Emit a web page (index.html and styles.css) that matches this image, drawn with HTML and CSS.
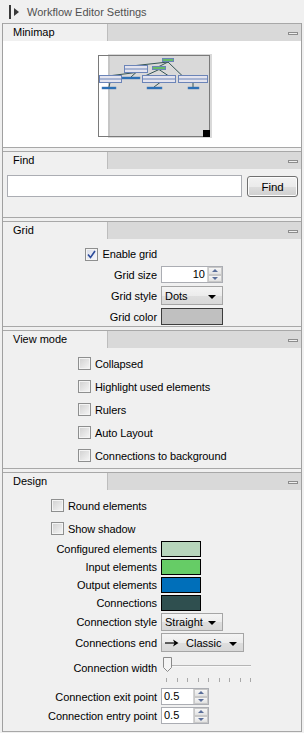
FILE: index.html
```html
<!DOCTYPE html>
<html lang="en">
<head>
  <meta charset="UTF-8">
  <title>Workflow Editor Settings</title>
  <link rel="stylesheet" href="styles.css">
</head>
<body>
  <div class="titlebar">
    <span class="grip"></span>
    <span class="arrow"></span>
    <span class="title">Workflow Editor Settings</span>
  </div>

  <div class="panel">
    <!-- Minimap -->
    <div class="section">
      <div class="section-head"><span class="tab">Minimap</span><span class="rest"><i class="minus"></i></span></div>
      <div class="section-body minimap">
        <svg class="map" width="114" height="84" viewBox="0 0 114 84">
          <rect x="10" y="0" width="104" height="84" fill="#d9d9d9"/>
          <rect x="10" y="1" width="2" height="81" fill="#c6c6c6"/>
          <g stroke="#355555" stroke-width="1" fill="none">
            <path d="M70 8 L38 11.5"/>
            <path d="M70 8 L61 12.5"/>
            <path d="M70 8 L84 21.5"/>
            <path d="M61 15.5 L48 21.5"/>
            <path d="M61 15.5 L70 21.5"/>
            <path d="M38 18.5 L14 21.5"/>
            <path d="M38 18.5 L33 23"/>
            <path d="M12 28.5 L11 33"/>
            <path d="M62 28.5 L56 33"/>
            <path d="M95 28.5 L95 33"/>
          </g>
          <g stroke="#6b84b8" stroke-width="1" fill="#e4e4ee">
            <rect x="26.5" y="11.5" width="23" height="7"/>
            <rect x="1.5" y="21.5" width="22" height="7"/>
            <rect x="44.5" y="21.5" width="33" height="7"/>
            <rect x="80.5" y="21.5" width="29" height="7"/>
          </g>
          <g stroke="#6b84b8" stroke-width="1">
            <path d="M27 15h22M2 25h21M45 25h32M81 25h28"/>
          </g>
          <g stroke="#6b84b8" fill="#66bb66">
            <rect x="64.5" y="4.5" width="11" height="3"/>
            <rect x="54.5" y="12.5" width="13" height="3"/>
          </g>
          <g fill="#1f6cb4" stroke="#5a7fb8" stroke-width="0.5">
            <rect x="24" y="23" width="18" height="2"/>
            <rect x="4" y="33" width="14" height="2"/>
            <rect x="49" y="33" width="15" height="2"/>
            <rect x="90" y="33" width="11" height="2"/>
          </g>
          <rect x="0.5" y="1.5" width="111" height="81" fill="none" stroke="#7a7a7a"/>
          <rect x="105" y="76" width="7" height="7" fill="#000"/>
        </svg>
      </div>
    </div>

    <!-- Find -->
    <div class="section">
      <div class="section-head"><span class="tab">Find</span><span class="rest"><i class="minus"></i></span></div>
      <div class="section-body find">
        <input class="field find-field" type="text">
        <button class="btn">Find</button>
      </div>
    </div>

    <!-- Grid -->
    <div class="section">
      <div class="section-head"><span class="tab">Grid</span><span class="rest"><i class="minus"></i></span></div>
      <div class="section-body grid-body">
        <div class="form">
          <label class="check check-right">
            <span class="box checked">
              <svg width="9" height="9" viewBox="0 0 9 9"><path d="M1 4.5 L3.5 7.5 L8 1" stroke="#2a4a9a" stroke-width="1.6" fill="none"/></svg>
            </span>
            Enable grid
          </label>
          <span></span>

          <span class="lbl">Grid size</span>
          <div class="spin spin-grid">
            <span class="spin-val right">10</span>
            <span class="spin-btns"><span class="up"></span><span class="down"></span></span>
          </div>

          <span class="lbl">Grid style</span>
          <div class="select sel-dots"><span>Dots</span><span class="caret"></span></div>

          <span class="lbl">Grid color</span>
          <span class="swatch sw-grid"></span>
        </div>
      </div>
    </div>

    <!-- View mode -->
    <div class="section">
      <div class="section-head"><span class="tab">View mode</span><span class="rest"><i class="minus"></i></span></div>
      <div class="section-body view-body">
        <div class="checks">
          <label class="check"><span class="box"></span>Collapsed</label>
          <label class="check"><span class="box"></span>Highlight used elements</label>
          <label class="check"><span class="box"></span>Rulers</label>
          <label class="check"><span class="box"></span>Auto Layout</label>
          <label class="check"><span class="box"></span>Connections to background</label>
        </div>
      </div>
    </div>

    <!-- Design -->
    <div class="section">
      <div class="section-head"><span class="tab">Design</span><span class="rest"><i class="minus"></i></span></div>
      <div class="section-body design-body">
        <label class="check design-check"><span class="box"></span>Round elements</label>
        <label class="check design-check"><span class="box"></span>Show shadow</label>
        <div class="form design-form">
          <span class="lbl">Configured elements</span>
          <span class="swatch sw-color" style="background:#b7d5bb"></span>
          <span class="lbl">Input elements</span>
          <span class="swatch sw-color" style="background:#66cc66"></span>
          <span class="lbl">Output elements</span>
          <span class="swatch sw-color" style="background:#006fba"></span>
          <span class="lbl">Connections</span>
          <span class="swatch sw-color" style="background:#2f4f4f"></span>

          <span class="lbl">Connection style</span>
          <div class="select sel-style"><span>Straight</span><span class="caret"></span></div>

          <span class="lbl">Connections end</span>
          <div class="select sel-end">
            <span class="end-val">
              <svg width="14" height="8" viewBox="0 0 14 8"><path d="M0 4h10" stroke="#000" stroke-width="1.2"/><path d="M8 0.5 L13.5 4 L8 7.5 L9.5 4 Z" fill="#000"/></svg>
              Classic
            </span>
            <span class="caret"></span>
          </div>

          <span class="lbl slider-lbl">Connection width</span>
          <div class="slider">
            <span class="track"></span>
            <svg class="thumb" width="11" height="17" viewBox="0 0 11 17"><path d="M1.5 1.5 h8 v10 l-4 4 l-4 -4 z" fill="#f4f4f4" stroke="#8a8a8a"/></svg>
            <div class="ticks"><i></i><i></i><i></i><i></i><i></i><i></i><i></i><i></i><i></i></div>
          </div>

          <span class="lbl">Connection exit point</span>
          <div class="spin spin-pt">
            <span class="spin-val">0.5</span>
            <span class="spin-btns"><span class="up"></span><span class="down"></span></span>
          </div>

          <span class="lbl">Connection entry point</span>
          <div class="spin spin-pt">
            <span class="spin-val">0.5</span>
            <span class="spin-btns"><span class="up"></span><span class="down"></span></span>
          </div>
        </div>
      </div>
    </div>
  </div>
</body>
</html>
```

FILE: styles.css
```css
/* Workflow editor settings panel */
body {
  margin: 0;
  background-color: #f0f0f0;
  font-family: "Liberation Sans", Arial, sans-serif;
  font-size: 11px;
  color: #000;
  width: 304px;
  height: 733px;
  overflow: hidden;
}

/* Title bar */
.titlebar {
  height: 23px;
  display: flex;
  align-items: center;
}
.grip {
  width: 2px;
  height: 14px;
  margin-left: 9px;
  background-color: #3a3a3a;
}
.arrow {
  width: 0;
  height: 0;
  margin-left: 3px;
  border-left: 5px solid #3a3a3a;
  border-top: 4px solid transparent;
  border-bottom: 4px solid transparent;
}
.title {
  margin-left: 8px;
  color: #505050;
  font-size: 11px;
}

/* Panel and sections */
.panel {
  margin-left: 2px;
  width: 298px;
  border-left: 1px solid #a0a0a0;
  border-right: 1px solid #a0a0a0;
}
.section {
  border-bottom: 1px solid #a8a8a8;
  margin-bottom: 3px;
}
.section-head {
  display: flex;
  height: 17px;
  border-top: 1px solid #a8a8a8;
}
.section-head .tab {
  width: 94px;
  padding-left: 10px;
  line-height: 17px;
  background-color: #f0f0f0;
  border-right: 1px solid #bdbdbd;
}
.section-head .rest {
  flex: 1;
  background-color: #d9d9d9;
  position: relative;
}
.minus {
  position: absolute;
  right: 3px;
  top: 8px;
  width: 8px;
  height: 1px;
  border: 1px solid #8c8c8c;
  background-color: #efefef;
}

.section-body {
  box-sizing: border-box;
}

/* Minimap */
.minimap {
  height: 106px;
  background-color: #fff;
  padding-top: 13px;
}
.map {
  display: block;
  margin-left: 95px;
}

/* Find */
.find {
  height: 48px;
  display: flex;
  padding: 6px 3px 0 4px;
  gap: 5px;
  align-items: flex-start;
}
.field {
  box-sizing: border-box;
  background-color: #fff;
  border: 1px solid #abadb3;
  font-family: inherit;
  font-size: 11px;
  margin: 0;
}
.find-field {
  width: 236px;
  height: 22px;
}
.btn {
  width: 51px;
  height: 21px;
  margin-top: 1px;
  padding: 0;
  font-family: inherit;
  font-size: 11.5px;
  color: #000;
  border: 1px solid #707070;
  border-radius: 3px;
  background: linear-gradient(#f2f2f2 0%, #ebebeb 50%, #dddddd 51%, #cfcfcf 100%);
  box-shadow: inset 0 0 0 1px #fcfcfc;
}

/* Forms */
.form {
  display: grid;
  grid-template-columns: 154px auto;
  column-gap: 4px;
  align-items: center;
  justify-content: start;
}
.lbl {
  text-align: right;
  white-space: nowrap;
  letter-spacing: -0.05px;
}

.grid-body {
  height: 87px;
  padding-top: 6px;
}
.grid-body .form {
  grid-template-rows: 18px 17px 19px 17px;
  row-gap: 3px;
}

/* Checkboxes */
.check {
  display: flex;
  align-items: center;
  gap: 4px;
  height: 23px;
  white-space: nowrap;
  letter-spacing: -0.1px;
}
.check-right {
  height: 18px;
  justify-content: flex-end;
}
.box {
  box-sizing: border-box;
  width: 13px;
  height: 13px;
  flex: none;
  border: 1px solid #8e8f8f;
  background: linear-gradient(135deg, #cfcfcf, #f7f7f7);
  box-shadow: inset 0 0 0 1px #f4f4f4;
  display: flex;
  align-items: center;
  justify-content: center;
}
.box.checked {
  background: linear-gradient(135deg, #d8dce8, #f7f8fc);
}

/* Spin boxes */
.spin {
  display: flex;
  box-sizing: border-box;
  height: 17px;
  border: 1px solid #abadb3;
  background-color: #fff;
}
.spin-grid {
  width: 62px;
}
.spin-pt {
  width: 48px;
}
.spin-val {
  flex: 1;
  padding: 0 2px;
  line-height: 15px;
}
.spin-val.right {
  text-align: right;
}
.spin-btns {
  width: 14px;
  display: flex;
  flex-direction: column;
  border-left: 1px solid #d4d4d4;
}
.spin-btns span {
  flex: 1;
  position: relative;
  background: linear-gradient(#f6f6f6, #e2e2e2);
  border: 1px solid #c8c8c8;
}
.spin-btns .up::after,
.spin-btns .down::after {
  content: "";
  position: absolute;
  left: 3px;
  top: 1px;
  border-left: 3px solid transparent;
  border-right: 3px solid transparent;
}
.spin-btns .up::after {
  border-bottom: 3px solid #5a6e9a;
}
.spin-btns .down::after {
  border-top: 3px solid #5a6e9a;
}

/* Selects */
.select {
  box-sizing: border-box;
  display: flex;
  align-items: center;
  justify-content: space-between;
  height: 19px;
  padding: 0 6px 0 3px;
  border: 1px solid #a5a5a5;
  background: linear-gradient(#f4f4f4 0%, #ececec 50%, #dedede 51%, #d8d8d8 100%);
}
.sel-dots {
  width: 62px;
}
.sel-style {
  width: 62px;
  height: 18px;
}
.sel-end {
  width: 83px;
}
.end-val {
  display: flex;
  align-items: center;
  gap: 7px;
}
.caret {
  width: 0;
  height: 0;
  border-left: 4px solid transparent;
  border-right: 4px solid transparent;
  border-top: 4px solid #000;
  margin-top: 2px;
}

/* Colour swatches */
.swatch {
  box-sizing: border-box;
  display: block;
  height: 17px;
  border: 1px solid #000;
}
.sw-grid {
  width: 62px;
  background-color: #c0c0c0;
  border-color: #3c3c3c;
}
.sw-color {
  width: 40px;
  height: 16px;
}

/* Design */
.design-body {
  height: 241px;
  padding-top: 4px;
}
.design-check {
  padding-left: 48px;
}
.design-form {
  margin-top: 1px;
  grid-template-rows: 16px 16px 16px 16px 18px 19px 32px 17px 17px;
  row-gap: 2px;
}
.slider-lbl {
  align-self: start;
  margin-top: 8px;
}
.slider {
  position: relative;
  width: 92px;
  height: 32px;
}
.track {
  position: absolute;
  left: 8px;
  top: 11px;
  width: 82px;
  height: 1px;
  background-color: #b5b5b5;
  border-bottom: 1px solid #f8f8f8;
}
.thumb {
  position: absolute;
  left: 1px;
  top: 2px;
}
.ticks {
  position: absolute;
  left: 5px;
  top: 24px;
  width: 85px;
  display: flex;
  justify-content: space-between;
}
.ticks i {
  width: 1px;
  height: 4px;
  background-color: #a8a8a8;
}

/* View mode */
.view-body {
  height: 120px;
  padding-top: 4px;
}
.checks {
  margin-left: 75px;
}
```
